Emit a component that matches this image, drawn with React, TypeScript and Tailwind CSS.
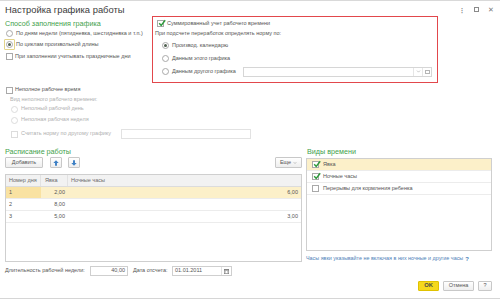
import { ChevronDown } from "lucide-react";

const green = "text-[#3f9f4c]";

function Radio({ on, dim }: { on?: boolean; dim?: boolean }) {
  return (
    <span
      className={`w-[7px] h-[7px] rounded-full border bg-white flex items-center justify-center shrink-0 ${
        dim ? "border-[#dcdcdc]" : "border-[#a9a9a9]"
      }`}
    >
      {on && <span className="w-[3px] h-[3px] rounded-full bg-[#4f5f4f]" />}
    </span>
  );
}

function Check({ on, dim }: { on?: boolean; dim?: boolean }) {
  return (
    <span
      className={`w-[7px] h-[7px] border bg-white relative shrink-0 ${
        dim ? "border-[#dcdcdc]" : "border-[#a9a9a9]"
      }`}
    >
      {on && (
        <svg viewBox="0 0 10 10" className="absolute left-[0px] top-[-2px] w-[8px] h-[8px]">
          <path d="M1.5 5.2 L4 8 L9 1.5" fill="none" stroke="#2e9a3c" strokeWidth="1.8" />
        </svg>
      )}
    </span>
  );
}

function Arrow({ up }: { up?: boolean }) {
  return (
    <svg viewBox="0 0 10 10" className={`w-[6px] h-[6px] ${up ? "" : "rotate-180"}`}>
      <path d="M5 0.5 L9.5 5.2 L6.6 5.2 L6.6 9.5 L3.4 9.5 L3.4 5.2 L0.5 5.2 Z" fill="#3c7fc4" />
    </svg>
  );
}

const schedule = [
  { day: "1", attend: "2,00", night: "6,00" },
  { day: "2", attend: "8,00", night: "" },
  { day: "3", attend: "5,00", night: "3,00" },
];

const timeKinds = [
  { name: "Явка", on: true },
  { name: "Ночные часы", on: true },
  { name: "Перерывы для кормления ребенка", on: false },
];

export default function App() {
  return (
    <div className="w-[500px] h-[300px] bg-white border-t border-[#d9d9d9] overflow-hidden flex flex-col text-[#555] font-['Liberation_Sans',Arial,sans-serif] text-[5.5px] leading-none">
      {/* header */}
      <div className="h-[15px] flex items-start justify-between pl-[5px] pr-[6px]">
        <div className="text-[9.4px] leading-[10px] mt-[4px] text-[#3c3c3c]">Настройка графика работы</div>
        <div className="flex items-center gap-[9px] mt-[5px] text-[#7a7a7a] text-[6px]">
          <span className="font-bold">⋮</span>
          <span className="w-[5px] h-[5px] border border-[#8a8a8a]" />
          <span className="text-[7px]">✕</span>
        </div>
      </div>

      {/* fill mode + overtime */}
      <div className="flex pl-[5px] h-[67px]">
        <div className="w-[147px] pt-[4px]">
          <div className={`text-[7.2px] leading-[8px] h-[8px] ${green}`}>Способ заполнения графика</div>
          <div className="flex items-center h-[11px] pl-[1px] gap-[3px]">
            <Radio />
            <span>По дням недели (пятидневка, шестидневка и т.п.)</span>
          </div>
          <div className="flex items-center h-[11px] pl-[1px] gap-[3px]">
            <span className="relative">
              <span className="absolute left-[-2px] top-[-2px] w-[11px] h-[11px] border border-[#e3d48a] rounded-[1px]" />
              <Radio on />
            </span>
            <span>По циклам произвольной длины</span>
          </div>
          <div className="flex items-center h-[11px] mt-[1px] pl-[1px] gap-[2px]">
            <Check />
            <span>При заполнении учитывать праздничные дни</span>
          </div>
        </div>
        <div className="w-[286px] h-[67px] border border-[#e2474c] pt-[1px]">
          <div className="flex items-center h-[11px] pl-[4px] gap-[3px]">
            <Check on />
            <span>Суммированный учет рабочего времени</span>
          </div>
          <div className="flex items-center h-[10px] pl-[2px]">При подсчете переработок определять норму по:</div>
          <div className="flex items-center h-[13px] pl-[9px] gap-[3px]">
            <Radio on />
            <span>Производ. календарю</span>
          </div>
          <div className="flex items-center h-[13px] pl-[9px] gap-[3px]">
            <Radio />
            <span>Данным этого графика</span>
          </div>
          <div className="flex items-center h-[13px] pl-[9px] gap-[3px]">
            <Radio />
            <span className="w-[68px]">Данным другого графика</span>
            <div className="w-[189px] h-[10px] border border-[#d6d6d6] flex justify-end items-stretch">
              <span className="w-[9px] border-l border-[#e6e6e6] flex items-center justify-center text-[#aaa]">
                <ChevronDown className="w-[5px] h-[5px]" strokeWidth={3} />
              </span>
              <span className="w-[9px] border-l border-[#e6e6e6] flex items-center justify-center">
                <span className="w-[5px] h-[4px] border border-[#b5b5b5]" />
              </span>
            </div>
          </div>
        </div>
      </div>

      {/* part-time */}
      <div className="pl-[6px] mt-[2px]">
        <div className="flex items-center h-[10px] gap-[2px]">
          <Check />
          <span>Неполное рабочее время</span>
        </div>
        <div className="flex items-center h-[9px] pl-[4px] text-[#b0b0b0]">Вид неполного рабочего времени:</div>
        <div className="flex items-center h-[10px] pl-[5px] gap-[3px] text-[#b0b0b0]">
          <Radio dim />
          <span>Неполный рабочий день</span>
        </div>
        <div className="flex items-center h-[10px] mt-[1px] pl-[5px] gap-[3px] text-[#b0b0b0]">
          <Radio dim />
          <span>Неполная рабочая неделя</span>
        </div>
        <div className="flex items-center h-[10px] mt-[4px] pl-[5px] gap-[3px] text-[#b0b0b0]">
          <Check dim />
          <span className="w-[97px]">Считать норму по другому графику</span>
          <div className="w-[130px] h-[10px] border border-[#e2e2e2]" />
        </div>
      </div>

      {/* schedule + time kinds */}
      <div className="flex items-start pl-[5px] mt-[9px]">
        <div className="w-[297px]">
          <div className={`text-[7.2px] leading-[8px] h-[8px] ${green}`}>Расписание работы</div>
          <div className="flex items-center h-[11px] mt-[1px]">
            <button className="w-[38px] h-[11px] border border-[#c8c8c8] rounded-[1px] bg-gradient-to-b from-white to-[#eeeeee] text-[5.5px] text-[#555]">
              Добавить
            </button>
            <button className="w-[12px] h-[11px] ml-[7px] border border-[#c8c8c8] rounded-[1px] bg-gradient-to-b from-white to-[#eeeeee] flex items-center justify-center">
              <Arrow up />
            </button>
            <button className="w-[12px] h-[11px] ml-[6px] border border-[#c8c8c8] rounded-[1px] bg-gradient-to-b from-white to-[#eeeeee] flex items-center justify-center">
              <Arrow />
            </button>
            <button className="ml-auto w-[27px] h-[11px] border border-[#c8c8c8] rounded-[1px] bg-gradient-to-b from-white to-[#eeeeee] flex items-center justify-center gap-[2px] text-[5.5px] text-[#555]">
              Еще <ChevronDown className="w-[4px] h-[4px] text-[#888]" strokeWidth={3} />
            </button>
          </div>
          <div className="h-[88px] mt-[6px] border border-[#cfcfcf]">
            <div className="flex h-[12px] bg-[#f2f2f2] border-b border-[#dcdcdc] text-[#6a6a6a]">
              <div className="w-[35px] pl-[3px] flex items-center border-r border-[#e2e2e2]">Номер дня</div>
              <div className="w-[27px] pl-[4px] flex items-center border-r border-[#e2e2e2]">Явка</div>
              <div className="flex-1 pl-[3px] flex items-center">Ночные часы</div>
            </div>
            {schedule.map((r, i) => (
              <div
                key={r.day}
                className={`flex h-[12px] border-b border-[#ececec] ${i === 0 ? "bg-[#fcf0c9]" : ""}`}
              >
                <div className={`w-[35px] pl-[3px] flex items-center ${i === 0 ? "bg-[#f9e2a2]" : ""}`}>{r.day}</div>
                <div className="w-[27px] pr-[3px] flex items-center justify-end">{r.attend}</div>
                <div className="flex-1 pr-[3px] flex items-center justify-end">{r.night}</div>
              </div>
            ))}
          </div>
        </div>

        <div className="w-[186px] ml-[4px]">
          <div className={`text-[7.2px] leading-[8px] h-[8px] pl-[1px] ${green}`}>Виды времени</div>
          <div className="h-[93px] mt-[2px] border border-[#cfcfcf]">
            {timeKinds.map((k, i) => (
              <div
                key={k.name}
                className={`flex items-center h-[12px] pl-[5px] gap-[4px] border-b border-[#ececec] ${
                  i === 0 ? "bg-[#fcf0c9]" : ""
                }`}
              >
                <Check on={k.on} />
                <span>{k.name}</span>
              </div>
            ))}
          </div>
          <div className="h-[8px] mt-[4px] flex items-center text-[#4f7fb8] text-[5.4px]">
            Часы явки указывайте не включая в них ночные и другие часы
            <span className="ml-[2px] font-bold text-[6px]">?</span>
          </div>
        </div>
      </div>

      {/* footer */}
      <div className="flex items-start pl-[5px] pr-[8px] mt-[3px]">
        <div className="flex items-center h-[10px]">
          <span className="w-[85px]">Длительность рабочей недели:</span>
          <div className="w-[38px] h-[10px] border border-[#cfcfcf] flex items-center justify-end pr-[2px]">40,00</div>
          <span className="ml-[5px] w-[39px]">Дата отсчета:</span>
          <div className="w-[60px] h-[10px] border border-[#cfcfcf] flex items-center pl-[2px]">
            <span className="flex-1">01.01.2011</span>
            <span className="w-[10px] h-full border-l border-[#e2e2e2] flex items-center justify-center">
              <svg viewBox="0 0 8 8" className="w-[5px] h-[5px]">
                <rect x="0.5" y="0.5" width="7" height="7" fill="#fff" stroke="#777" />
                <rect x="0.5" y="0.5" width="7" height="2" fill="#777" />
                <path d="M2 4h1M5 4h1M2 6h1M5 6h1" stroke="#777" />
              </svg>
            </span>
          </div>
        </div>
        <div className="ml-auto flex items-center gap-[4px] mt-[15px]">
          <button className="w-[21px] h-[10px] rounded-[1px] bg-[#f5d81d] border border-[#e0c200] text-[5.8px] font-bold text-[#4a4a4a]">
            OK
          </button>
          <button className="w-[31px] h-[10px] rounded-[1px] border border-[#c8c8c8] bg-gradient-to-b from-white to-[#efefef] text-[5.5px] text-[#555]">
            Отмена
          </button>
          <button className="w-[14px] h-[10px] rounded-[1px] border border-[#c8c8c8] bg-gradient-to-b from-white to-[#efefef] text-[5.5px] text-[#555]">
            ?
          </button>
        </div>
      </div>
      <div className="mt-auto h-[2px] border-t border-[#d6d6d6]" />
    </div>
  );
}
